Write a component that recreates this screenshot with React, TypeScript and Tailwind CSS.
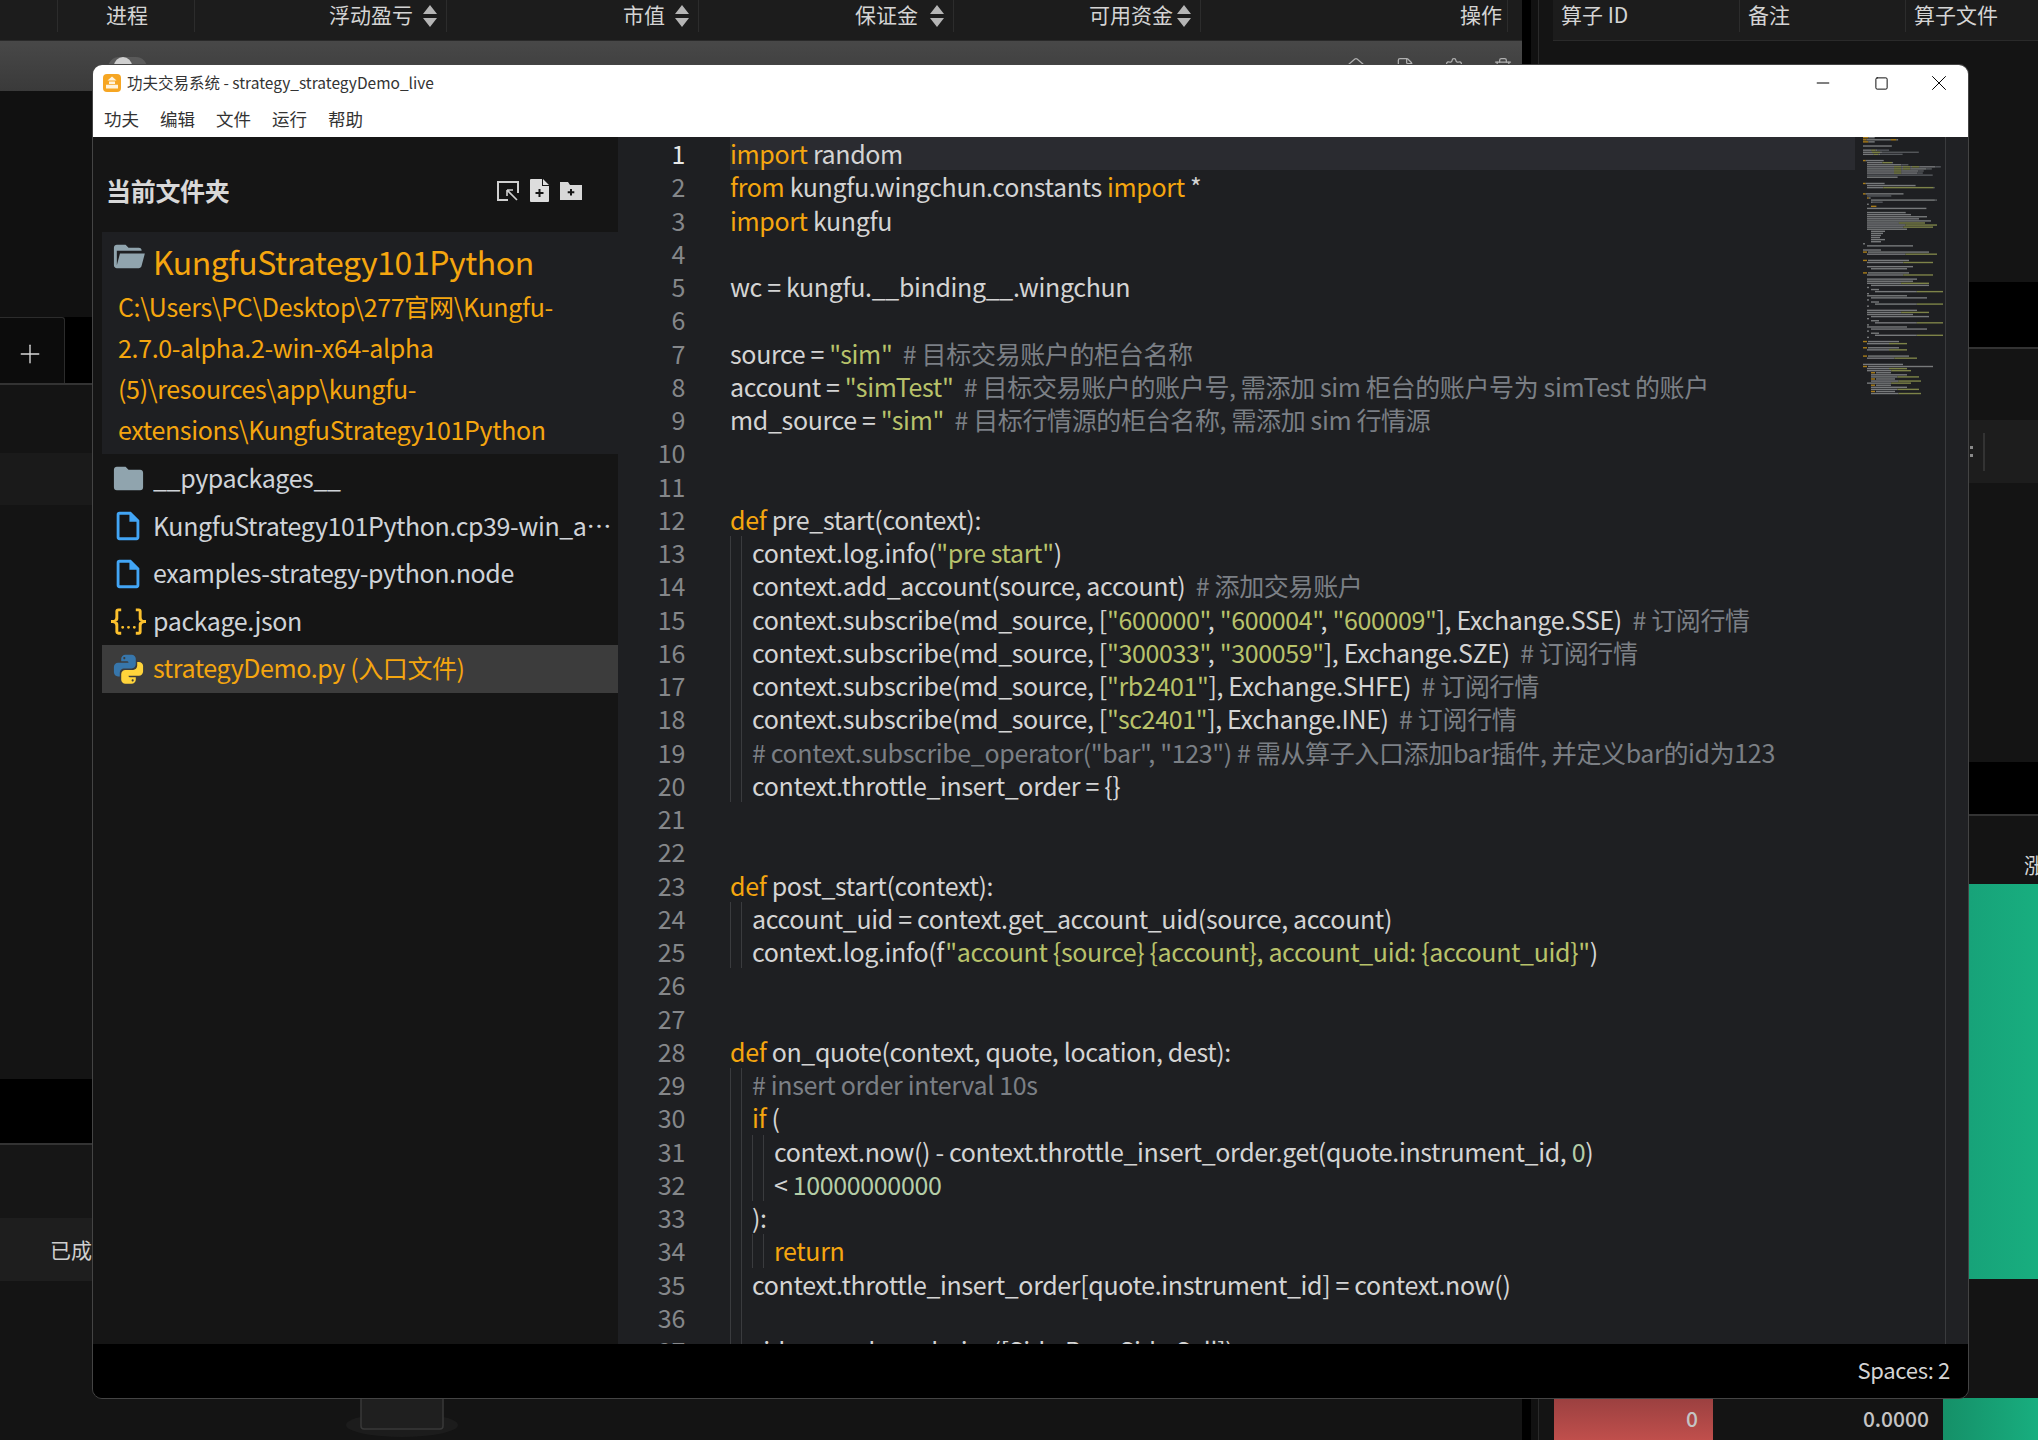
import { File, House, Minus, Plus, Settings, Square, Trash2, X } from "lucide-react";

const FONT = "font-['Noto_Sans_CJK_SC','Noto_Sans',sans-serif]";

const KW = "text-[#f5a60f]";
const STR = "text-[#b8c26a]";
const COM = "text-[#7b7f85]";
const NUM = "text-[#b5cea8]";

type Tok = string | [string, string];
type CodeLine = { guides?: number; tokens?: Tok[] };

const LINES: CodeLine[] = [
  { tokens: [["import", KW], " random"] },
  { tokens: [["from", KW], " kungfu.wingchun.constants ", ["import", KW], " *"] },
  { tokens: [["import", KW], " kungfu"] },
  {},
  { tokens: ["wc = kungfu.__binding__.wingchun"] },
  {},
  { tokens: ["source = ", ['"sim"', STR], "  ", ["# 目标交易账户的柜台名称", COM]] },
  { tokens: ["account = ", ['"simTest"', STR], "  ", ["# 目标交易账户的账户号, 需添加 sim 柜台的账户号为 simTest 的账户", COM]] },
  { tokens: ["md_source = ", ['"sim"', STR], "  ", ["# 目标行情源的柜台名称, 需添加 sim 行情源", COM]] },
  {},
  {},
  { tokens: [["def", KW], " pre_start(context):"] },
  { guides: 2, tokens: ["context.log.info(", ['"pre start"', STR], ")"] },
  { guides: 2, tokens: ["context.add_account(source, account)  ", ["# 添加交易账户", COM]] },
  { guides: 2, tokens: ["context.subscribe(md_source, [", ['"600000"', STR], ", ", ['"600004"', STR], ", ", ['"600009"', STR], "], Exchange.SSE)  ", ["# 订阅行情", COM]] },
  { guides: 2, tokens: ["context.subscribe(md_source, [", ['"300033"', STR], ", ", ['"300059"', STR], "], Exchange.SZE)  ", ["# 订阅行情", COM]] },
  { guides: 2, tokens: ["context.subscribe(md_source, [", ['"rb2401"', STR], "], Exchange.SHFE)  ", ["# 订阅行情", COM]] },
  { guides: 2, tokens: ["context.subscribe(md_source, [", ['"sc2401"', STR], "], Exchange.INE)  ", ["# 订阅行情", COM]] },
  { guides: 2, tokens: [['# context.subscribe_operator("bar", "123") # 需从算子入口添加bar插件, 并定义bar的id为123', COM]] },
  { guides: 2, tokens: ["context.throttle_insert_order = {}"] },
  {},
  {},
  { tokens: [["def", KW], " post_start(context):"] },
  { guides: 2, tokens: ["account_uid = context.get_account_uid(source, account)"] },
  { guides: 2, tokens: ["context.log.info(f", ['"account {source} {account}, account_uid: {account_uid}"', STR], ")"] },
  {},
  {},
  { tokens: [["def", KW], " on_quote(context, quote, location, dest):"] },
  { guides: 2, tokens: [["# insert order interval 10s", COM]] },
  { guides: 2, tokens: [["if", KW], " ("] },
  { guides: 4, tokens: ["context.now() - context.throttle_insert_order.get(quote.instrument_id, ", ["0", NUM], ")"] },
  { guides: 4, tokens: ["< ", ["10000000000", NUM]] },
  { guides: 2, tokens: ["):"] },
  { guides: 4, tokens: [["return", KW]] },
  { guides: 2, tokens: ["context.throttle_insert_order[quote.instrument_id] = context.now()"] },
  { guides: 2 },
  { guides: 2, tokens: ["side = random.choice([Side.Buy, Side.Sell])"] },
];

// rest of the file as the minimap shows it: [spaces, length, kind], 1 = def line, 2 = has a string
const MINI_REST: [number, number, number][] = [
  [2, 44, 0], [2, 60, 0], [2, 52, 0], [2, 64, 0], [2, 58, 2], [2, 70, 2], [2, 66, 2], [2, 40, 0],
  [4, 14, 0], [4, 12, 0], [4, 10, 0], [4, 9, 0], [4, 14, 0], [4, 10, 0], [0, 2, 0],
  [2, 46, 0], [0, 0, 0], [0, 18, 0], [0, 66, 1], [2, 70, 2], [0, 0, 0], [0, 0, 0], [0, 46, 1],
  [2, 66, 2], [0, 0, 0], [2, 46, 0], [4, 36, 0], [0, 0, 0], [0, 46, 1], [2, 66, 2], [0, 0, 0],
  [2, 50, 0], [2, 46, 0], [2, 62, 2], [4, 58, 0], [2, 2, 0], [4, 8, 0], [6, 76, 2], [2, 2, 0],
  [2, 40, 0], [4, 56, 0], [2, 2, 0], [4, 8, 0], [6, 76, 2], [2, 2, 0], [0, 0, 0], [2, 50, 0], [2, 62, 2],
  [2, 46, 0], [4, 58, 0], [2, 2, 0], [4, 8, 0], [6, 76, 2], [2, 2, 0], [2, 40, 0], [4, 56, 0],
  [2, 2, 0], [4, 8, 0], [6, 76, 2], [2, 2, 0], [0, 0, 0], [0, 36, 1], [2, 40, 2], [0, 0, 0],
  [0, 36, 1], [2, 40, 2], [0, 0, 0], [0, 0, 0], [0, 46, 1], [2, 50, 2], [0, 0, 0], [0, 0, 0],
  [0, 40, 0], [0, 70, 1], [2, 40, 2], [2, 44, 2], [4, 20, 1], [4, 36, 0], [4, 48, 2],
  [4, 24, 1], [4, 50, 2], [2, 44, 2], [4, 20, 1], [4, 36, 0], [4, 48, 2],
  [4, 24, 1], [4, 50, 2],
];

function miniRows() {
  const rows: { x: number; y: number; w: number; color: string }[] = [];
  LINES.forEach((line, i) => {
    let x = 8 + (line.guides ?? 0) * 2;
    (line.tokens ?? []).forEach((t) => {
      const text = typeof t === "string" ? t : t[0];
      const color = typeof t === "string" ? "#77797b" : t[1] === KW ? "#a87c1a" : t[1] === STR ? "#7d8348" : "#55585c";
      const w = text.length * 0.9;
      rows.push({ x, y: i * 2.08, w: Math.min(w, 88 - x), color });
      x += w;
    });
  });
  MINI_REST.forEach(([indent, len, kind], i) => {
    if (!len) return;
    const y = (LINES.length + i) * 2.08;
    const x = 8 + indent * 2;
    if (kind === 1) {
      rows.push({ x, y, w: 4, color: "#a87c1a" });
      rows.push({ x: x + 5, y, w: Math.max(len - 5, 1), color: "#77797b" });
    } else if (kind === 2) {
      rows.push({ x, y, w: len * 0.55, color: "#77797b" });
      rows.push({ x: x + len * 0.55, y, w: Math.min(len * 0.45, 88 - x - len * 0.55), color: "#7d8348" });
    } else {
      rows.push({ x, y, w: len, color: "#77797b" });
    }
  });
  return rows;
}

function SortArrows({ gap }: { gap: string }) {
  return (
    <svg width="14" height="22" viewBox="0 0 14 22" className={gap}>
      <path d="M7 0l7 9H0z M7 22l7-9H0z" fill="#b5b5b5" />
    </svg>
  );
}

function HeadCell({ label, width, sort, end, gap = "ml-[10px]", pr = "pr-[9px]" }: { label: string; width: string; sort?: boolean; end?: boolean; gap?: string; pr?: string }) {
  return (
    <div className={`flex h-[32px] items-center border-r border-[#2c2c2c] ${width} ${end ? `justify-end ${pr}` : "pl-[48px]"}`}>
      <span className="pb-[3px]">{label}</span>
      {sort && <SortArrows gap={gap} />}
    </div>
  );
}

function LeftPanel() {
  return (
    <div className="flex w-[1522px] flex-col bg-[#141414]">
      <div className="flex h-[41px] items-start border-b border-[#2a2a2a] bg-[#1c1c1c] text-[21px] leading-none text-[#d4d4d4]">
        <div className="h-[32px] w-[58px] border-r border-[#2c2c2c]" />
        <HeadCell label="进程" width="w-[137px]" />
        <HeadCell label="浮动盈亏" width="w-[252px]" sort end />
        <HeadCell label="市值" width="w-[252px]" sort end />
        <HeadCell label="保证金" width="w-[255px]" sort end gap="ml-[12px]" />
        <HeadCell label="可用资金" width="w-[247px]" sort end gap="ml-[4px]" />
        <HeadCell label="操作" width="w-[307px]" end pr="pr-[5px]" />
      </div>
      <div className="flex h-[50px] items-start justify-between bg-gradient-to-b from-[#484848] to-[#3a3a3a] pt-[16px] pr-[9px] pl-[108px]">
        <div className="flex h-[22px] w-[39px] items-start rounded-full bg-[#5a5a5a] pl-[6px]">
          <div className="h-[18px] w-[18px] rounded-full bg-[#cfcfcf]" />
        </div>
        <div className="flex gap-[29px] text-[#b0b0b0]">
          <House size={20} strokeWidth={1.5} />
          <File size={20} strokeWidth={1.5} />
          <Settings size={20} strokeWidth={1.5} />
          <Trash2 size={20} strokeWidth={1.5} />
        </div>
      </div>
      <div className="h-[226px] bg-[#111111]" />
      <div className="flex h-[68px] border-b-2 border-[#333333] bg-black">
        <div className="flex w-[65px] items-center justify-center rounded-tr-[3px] border-t border-r border-[#2c2c2c] bg-[#0c0c0c] pt-[6px] pr-[4px]">
          <Plus size={30} strokeWidth={1.1} className="text-[#d8d8d8]" />
        </div>
      </div>
      <div className="h-[68px]" />
      <div className="h-[52px] bg-[#1a1a1a]" />
      <div className="h-[574px]" />
      <div className="h-[66px] border-b-2 border-[#333333] bg-black" />
      <div className="h-[73px] bg-[#161616]" />
      <div className="flex h-[63px] items-center bg-[#1e1e1e] pl-[50px] text-[21px] text-[#cfcfcf]">已成交</div>
      <div className="flex h-[159px] flex-col pl-[346px]">
        <svg width="112" height="159" viewBox="0 0 112 159">
          <ellipse cx="56" cy="144" rx="56" ry="12" fill="#1c1c1c" />
          <path d="M15 100h82v45a3 3 0 0 1-3 3H18a3 3 0 0 1-3-3z" fill="#1f1f1f" stroke="#383838" strokeWidth="1.5" />
        </svg>
      </div>
    </div>
  );
}

function RightPanel() {
  return (
    <div className="flex flex-1">
      <div className="w-[9px] bg-black" />
      <div className="w-[8px] border-r border-[#2a2a2a] bg-[#111111]" />
      <div className="flex min-w-0 flex-1 flex-col bg-[#141414]">
        <div className="ml-[14px] flex h-[41px] items-start border-b border-[#2a2a2a] bg-[#1c1c1c] text-[21px] leading-none text-[#d4d4d4]">
          <div className="flex h-[32px] w-[187px] items-center border-r border-[#2c2c2c] pb-[3px] pl-[8px]">算子 ID</div>
          <div className="flex h-[32px] w-[166px] items-center border-r border-[#2c2c2c] pb-[3px] pl-[8px]">备注</div>
          <div className="flex h-[32px] flex-1 items-center pb-[3px] pl-[8px]">算子文件</div>
        </div>
        <div className="h-[241px]" />
        <div className="h-[67px] border-b-2 border-[#333333] bg-black" />
        <div className="h-[71px]" />
        <div className="flex h-[63px] items-center bg-[#1d1d1d] pl-[431px]">
          <div className="flex w-[3px] flex-col gap-[5px]">
            <div className="h-[3px] bg-[#8a8a8a]" />
            <div className="h-[3px] bg-[#8a8a8a]" />
          </div>
          <div className="ml-[10px] h-[38px] w-[2px] bg-[#333333]" />
        </div>
        <div className="h-[279px]" />
        <div className="h-[54px] border-b-2 border-[#333333] bg-black" />
        <div className="flex h-[68px] items-end justify-end pb-[4px] text-[21px] text-[#d4d4d4]">
          <span className="-mr-[28px]">涨跌</span>
        </div>
        <div className="flex h-[395px] justify-end">
          <div className="w-[80px] bg-gradient-to-r from-[#17a178] to-[#18ae7f]" />
        </div>
        <div className="h-[119px]" />
        <div className="flex h-[42px] items-center pl-[15px] text-[21px] font-medium text-[#c4c4c4]">
          <div className="flex h-full w-[159px] items-center justify-end bg-gradient-to-b from-[#9b4040] to-[#c04f4c] pr-[15px]">0</div>
          <div className="flex w-[230px] justify-end pr-[14px]">0.0000</div>
          <div className="h-full flex-1 bg-gradient-to-r from-[#159068] to-[#18ae7f]" />
        </div>
      </div>
    </div>
  );
}

function AppLogo() {
  return (
    <svg width="18" height="18" viewBox="0 0 18 18" className="shrink-0">
      <rect width="18" height="18" rx="4" fill="#f6a623" />
      <path d="M9 2.5l4.5 4h-9z M6 7.5h6V10H6z M3 10.8h12v3.7H3z" fill="#fff3dc" />
    </svg>
  );
}

function FileRow({ icon, label, active }: { icon: React.ReactNode; label: string; active?: boolean }) {
  return (
    <div className={`flex h-[47.5px] items-center pl-[9px] ${active ? "bg-[#3c3c3c] text-[#f5a60f]" : "text-[#cfd3d8]"}`}>
      <div className="flex w-[42px] shrink-0">{icon}</div>
      <span className="truncate pr-[6px] pb-[2px]">{label}</span>
    </div>
  );
}

function Sidebar() {
  return (
    <div className="flex w-[525px] shrink-0 flex-col bg-[#151515] pl-[9px]">
      <div className="flex h-[95px] shrink-0 items-center justify-between pt-[12px] pr-[36px] pl-[4px]">
        <span className="text-[25px] font-bold tracking-[-0.3px] text-[#d8d8d8]">当前文件夹</span>
        <div className="flex items-center gap-[11px]">
          <svg width="22" height="20" viewBox="0 0 22 20" fill="none" stroke="#d0d0d0" strokeWidth="2">
            <path d="M11 19H1V1h20v11" />
            <path d="M10 9l10 10M10 9h6M10 9v6" strokeWidth="1.6" />
          </svg>
          <svg width="19" height="23" viewBox="0 0 19 23">
            <path d="M1 0h11v7h7v15a1 1 0 0 1-1 1H1a1 1 0 0 1-1-1V1a1 1 0 0 1 1-1z M13 0l6 6h-6z" fill="#dddddd" />
            <path d="M9.5 10v8M5.5 14h8" stroke="#151515" strokeWidth="2" />
          </svg>
          <svg width="22" height="18" viewBox="0 0 22 18">
            <path d="M0 0h8l2 3h12v15H0z" fill="#d8d8d8" />
            <path d="M11 7v6.5M7.7 10.2h6.6" stroke="#151515" strokeWidth="2" />
          </svg>
        </div>
      </div>
      <div className="flex h-[222px] shrink-0 flex-col bg-[#1e1f22] text-[#f5a60f]">
        <div className="flex h-[54px] items-center pl-[9px] text-[32px] leading-none tracking-[-0.45px]">
          <svg width="35" height="35" viewBox="0 0 24 24" className="mr-[7px] mt-[-6px] shrink-0">
            <path fill="#90a4ae" d="M19,20H4C2.89,20 2,19.1 2,18V6C2,4.89 2.89,4 4,4H10L12,6H19A2,2 0 0,1 21,8H21L4,8V18L6.14,10H23.21L20.93,18.5C20.7,19.37 19.92,20 19,20Z" />
          </svg>
          <span className="pt-[4px]">KungfuStrategy101Python</span>
        </div>
        <div className="whitespace-nowrap pl-[16px] text-[25px] leading-[41px] tracking-[-0.35px]">
          <div>C:\Users\PC\Desktop\277官网\Kungfu-</div>
          <div>2.7.0-alpha.2-win-x64-alpha</div>
          <div>(5)\resources\app\kungfu-</div>
          <div>extensions\KungfuStrategy101Python</div>
        </div>
      </div>
      <div className="flex flex-col pt-[1px] text-[25px] tracking-[-0.4px]">
        <FileRow
          label="__pypackages__"
          icon={
            <svg width="35" height="35" viewBox="0 0 24 24">
              <path fill="#90a4ae" d="M10,4H4C2.89,4 2,4.89 2,6V18A2,2 0 0,0 4,20H20A2,2 0 0,0 22,18V8C22,6.89 21.1,6 20,6H12L10,4Z" />
            </svg>
          }
        />
        <FileRow
          label="KungfuStrategy101Python.cp39-win_amd64.pyd"
          icon={
            <svg width="34" height="34" viewBox="0 0 24 24">
              <path fill="#42a5f5" d="M14,2H6A2,2 0 0,0 4,4V20A2,2 0 0,0 6,22H18A2,2 0 0,0 20,20V8L14,2M18,20H6V4H13V9H18V20Z" />
            </svg>
          }
        />
        <FileRow
          label="examples-strategy-python.node"
          icon={
            <svg width="34" height="34" viewBox="0 0 24 24">
              <path fill="#42a5f5" d="M14,2H6A2,2 0 0,0 4,4V20A2,2 0 0,0 6,22H18A2,2 0 0,0 20,20V8L14,2M18,20H6V4H13V9H18V20Z" />
            </svg>
          }
        />
        <FileRow
          label="package.json"
          icon={
            <svg width="35" height="35" viewBox="0 0 24 24">
              <path fill="#fbc02d" d="M5,3H7V5H5V10A2,2 0 0,1 3,12A2,2 0 0,1 5,14V19H7V21H5C3.93,20.73 3,20.1 3,19V15A2,2 0 0,0 1,13H0V11H1A2,2 0 0,0 3,9V5A2,2 0 0,1 5,3M19,3A2,2 0 0,1 21,5V9A2,2 0 0,0 23,11H24V13H23A2,2 0 0,0 21,15V19A2,2 0 0,1 19,21H17V19H19V14A2,2 0 0,1 21,12A2,2 0 0,1 19,10V5H17V3H19M12,15A1,1 0 0,1 13,16A1,1 0 0,1 12,17A1,1 0 0,1 11,16A1,1 0 0,1 12,15M8,15A1,1 0 0,1 9,16A1,1 0 0,1 8,17A1,1 0 0,1 7,16A1,1 0 0,1 8,15M16,15A1,1 0 0,1 17,16A1,1 0 0,1 16,17A1,1 0 0,1 15,16A1,1 0 0,1 16,15Z" />
            </svg>
          }
        />
        <FileRow
          active
          label="strategyDemo.py (入口文件)"
          icon={
            <svg width="35" height="35" viewBox="0 0 24 24">
              <path fill="#3776ab" d="M4.86,17.5C3.28,17.5 2,16.22 2,14.64V10.86C2,9.28 3.28,8 4.86,8H12C12,7.61 11.68,7.04 11.29,7.04H7V5.36C7,3.78 8.28,2.5 9.86,2.5H14.14C15.72,2.5 17,3.78 17,5.36V9.11C17,10.69 15.72,11.96 14.14,11.96H8.89C7.31,11.96 6.04,13.24 6.04,14.82V17.5H4.86M9.14,5.71C9.54,5.71 9.86,5.41 9.86,4.82C9.86,4.23 9.54,4.11 9.14,4.11C8.75,4.11 8.43,4.23 8.43,4.82C8.43,5.41 8.75,5.71 9.14,5.71Z" />
              <path fill="#ffd43b" d="M19.14,7.5A2.86,2.86 0 0,1 22,10.36V14.14A2.86,2.86 0 0,1 19.14,17H12C12,17.39 12.32,17.96 12.71,17.96H17V19.64A2.86,2.86 0 0,1 14.14,22.5H9.86A2.86,2.86 0 0,1 7,19.64V15.89C7,14.31 8.28,13.04 9.86,13.04H15.11C16.69,13.04 17.96,11.76 17.96,10.18V7.5H19.14M14.86,19.29C14.46,19.29 14.14,19.59 14.14,20.18C14.14,20.77 14.46,20.89 14.86,20.89A0.71,0.71 0 0,0 15.57,20.18C15.57,19.59 15.25,19.29 14.86,19.29Z" />
            </svg>
          }
        />
      </div>
    </div>
  );
}

function Editor() {
  return (
    <div className="flex flex-1 overflow-hidden bg-[#1e1f22]">
      <div className="w-[112px] shrink-0 pr-[45px] text-right text-[25px] leading-[33.26px] tracking-[-0.3px] text-[#85878a]">
        {LINES.map((_, i) => (
          <div key={i} className={`h-[33.26px] ${i === 0 ? "text-[#e8e8e8]" : ""}`}>
            {i + 1}
          </div>
        ))}
      </div>
      <div className="flex-1 whitespace-pre text-[25px] leading-[33.26px] tracking-[-0.36px] text-[#d4d4d4]">
        {LINES.map((line, i) => (
          <div key={i} className={`flex h-[33.26px] ${i === 0 ? "bg-[#2a2b30]" : ""}`}>
            {Array.from({ length: line.guides ?? 0 }).map((_, g) => (
              <div key={g} className="h-full w-[11px] shrink-0 border-l border-[#3a3b3e]" />
            ))}
            <span>
              {(line.tokens ?? []).map((t, j) =>
                typeof t === "string" ? <span key={j}>{t}</span> : <span key={j} className={t[1]}>{t[0]}</span>,
              )}
            </span>
          </div>
        ))}
      </div>
      <div className="w-[90px] shrink-0">
        <svg width="90" height="300" viewBox="0 0 90 300">
          {miniRows().map((r, i) => (
            <rect key={i} x={r.x} y={r.y} width={r.w} height="1.4" fill={r.color} />
          ))}
        </svg>
      </div>
      <div className="w-[23px] shrink-0 border-l border-[#3a3b3e] bg-[#202124]" />
    </div>
  );
}

function EditorWindow() {
  return (
    <div className="absolute top-[64px] left-[92px] flex h-[1335px] w-[1877px] flex-col overflow-hidden rounded-[10px] border border-[#444444]">
      <div className="flex h-[72px] shrink-0 flex-col bg-white text-[#333333]">
        <div className="flex h-[36px] items-center justify-between pl-[10px]">
          <div className="flex items-center gap-[6px] text-[15.5px]">
            <AppLogo />
            <span>功夫交易系统 - strategy_strategyDemo_live</span>
          </div>
          <div className="flex items-center text-black">
            <div className="flex w-[58px] justify-center"><Minus size={20} strokeWidth={1.2} /></div>
            <div className="flex w-[58px] justify-center"><Square size={15} strokeWidth={1.5} /></div>
            <div className="flex w-[58px] justify-center"><X size={26} strokeWidth={0.9} /></div>
          </div>
        </div>
        <div className="flex h-[36px] items-center gap-[21px] pl-[11px] text-[17.5px]">
          <span>功夫</span>
          <span>编辑</span>
          <span>文件</span>
          <span>运行</span>
          <span>帮助</span>
        </div>
      </div>
      <div className="flex min-h-0 flex-1">
        <Sidebar />
        <Editor />
      </div>
      <div className="flex h-[54px] shrink-0 items-center justify-end bg-black pr-[18px] pb-[3px] text-[22px] tracking-[-0.3px] text-[#d4d4d4]">Spaces: 2</div>
    </div>
  );
}

export default function App() {
  return (
    <div className={`relative flex h-[1440px] w-[2038px] overflow-hidden bg-black ${FONT}`}>
      <LeftPanel />
      <RightPanel />
      <EditorWindow />
    </div>
  );
}
